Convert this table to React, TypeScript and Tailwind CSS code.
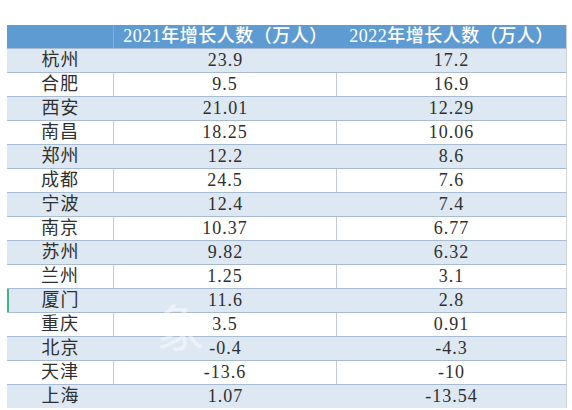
const rows: [string, string, string][] = [
  ["杭州", "23.9", "17.2"],
  ["合肥", "9.5", "16.9"],
  ["西安", "21.01", "12.29"],
  ["南昌", "18.25", "10.06"],
  ["郑州", "12.2", "8.6"],
  ["成都", "24.5", "7.6"],
  ["宁波", "12.4", "7.4"],
  ["南京", "10.37", "6.77"],
  ["苏州", "9.82", "6.32"],
  ["兰州", "1.25", "3.1"],
  ["厦门", "11.6", "2.8"],
  ["重庆", "3.5", "0.91"],
  ["北京", "-0.4", "-4.3"],
  ["天津", "-13.6", "-10"],
  ["上海", "1.07", "-13.54"],
]

export default function App() {
  return (
    <div className="relative w-[572px] h-[410px] overflow-hidden bg-white pt-[25px] pl-[7px] font-['Liberation_Serif','Noto_Sans_CJK_SC',serif] text-[#2f2f2f]">
      <div className="w-[560px] border-r border-[#c9d3de]">
        {/* Header */}
        <div className="grid grid-cols-[107px_223px_229px] h-[23px] bg-[#5f9bd3] text-white text-[18px] leading-[23px] font-medium">
          <div className="border-r border-[#7fb0dc]" />
          <div className="text-center tracking-[0.5px]">2021年增长人数（万人）</div>
          <div className="text-center tracking-[0.5px]">2022年增长人数（万人）</div>
        </div>

        {rows.map(([city, a, b], i) => {
          const shaded = i % 2 === 0
          return (
            <div
              key={city}
              className={
                shaded
                  ? "relative grid grid-cols-[107px_223px_229px] h-[24px] bg-[#dde8f3] border-t border-[#a7bcd2] text-[18px] leading-[23px]"
                  : "relative grid grid-cols-[107px_223px_229px] h-[24px] bg-white border-t border-[#a7bcd2] text-[18px] leading-[23px]"
              }
            >
              {city === "厦门" && (
                <div className="absolute left-0 top-0 bottom-0 w-[2px] bg-[#3fb58a]" />
              )}
              <div className={shaded ? "text-center tracking-[1px]" : "text-center tracking-[1px] border-r border-[#c4c9cf]"}>
                {city}
              </div>
              <div className={shaded ? "text-center tracking-[1px]" : "text-center tracking-[1px] border-r border-[#c4c9cf]"}>
                {a}
              </div>
              <div className="text-center tracking-[1px]">{b}</div>
            </div>
          )
        })}
      </div>

      {/* watermark */}
      <div className="absolute left-[155px] top-[300px] flex gap-[14px] text-[50px] leading-none text-white/45 font-['Noto_Sans_CJK_SC',sans-serif] pointer-events-none">
        <span>象</span>
      </div>
    </div>
  )
}
